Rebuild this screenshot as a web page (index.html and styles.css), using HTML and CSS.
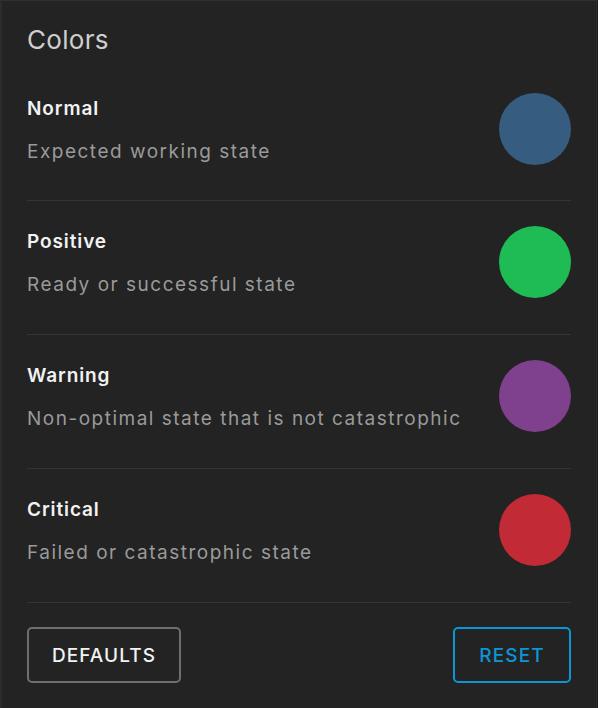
FILE: index.html
```html
<!DOCTYPE html>
<html>
<head>
<meta charset="utf-8">
<link rel="stylesheet" href="styles.css">
</head>
<body>
<div class="panel">
  <h1 class="title">Colors</h1>
  <div class="row">
    <div class="text">
      <div class="name">Normal</div>
      <div class="desc">Expected working state</div>
    </div>
    <div class="swatch normal"></div>
  </div>
  <div class="row">
    <div class="text">
      <div class="name">Positive</div>
      <div class="desc">Ready or successful state</div>
    </div>
    <div class="swatch positive"></div>
  </div>
  <div class="row">
    <div class="text">
      <div class="name">Warning</div>
      <div class="desc">Non-optimal state that is not catastrophic</div>
    </div>
    <div class="swatch warning"></div>
  </div>
  <div class="row">
    <div class="text">
      <div class="name">Critical</div>
      <div class="desc">Failed or catastrophic state</div>
    </div>
    <div class="swatch critical"></div>
  </div>
  <div class="actions">
    <button class="btn btn-default">DEFAULTS</button>
    <button class="btn btn-reset">RESET</button>
  </div>
</div>
</body>
</html>
```
FILE: styles.css
```css
html, body {
  margin: 0;
  padding: 0;
  background: #1b1b1b;
}
body {
  font-family: Inter, "Noto Sans", sans-serif;
  width: 598px;
  height: 708px;
  overflow: hidden;
}
.panel {
  box-sizing: border-box;
  width: 597px;
  height: 708px;
  background: #232323;
  border-top: 1px solid #303030;
  border-left: 2px solid #2c2c2c;
  border-right: 1px solid #2c2c2c;
  padding: 0 25px 0 25px;
  display: flex;
  flex-direction: column;
}
.title {
  margin: 0;
  height: 67px;
  box-sizing: border-box;
  padding-top: 24px;
  font-size: 26px;
  line-height: 30px;
  font-weight: 400;
  letter-spacing: 0.3px;
  color: #cfcfcf;
}
.row {
  display: flex;
  align-items: center;
  justify-content: space-between;
  padding: 25px 0 36px 0;
  border-bottom: 1px solid #353535;
}
.row:first-of-type {
  padding-bottom: 35px;
}
.text {
  display: flex;
  flex-direction: column;
  gap: 19px;
  margin-top: 2px;
}
.name {
  font-size: 19px;
  line-height: 24px;
  font-weight: 600;
  letter-spacing: 0.9px;
  color: #f2f2f2;
}
.desc {
  font-size: 19px;
  line-height: 24px;
  letter-spacing: 1.5px;
  color: #9a9a9a;
}
.swatch {
  width: 72px;
  height: 72px;
  border-radius: 50%;
  flex: none;
}
.normal { background: #365c80; }
.positive { background: #1fbb55; }
.warning { background: #7f418e; }
.critical { background: #c22b36; }
.actions {
  display: flex;
  justify-content: space-between;
  padding-top: 24px;
}
.btn {
  height: 56px;
  box-sizing: border-box;
  background: transparent;
  border-radius: 5px;
  font-family: Inter, "Noto Sans", sans-serif;
  font-size: 19px;
  font-weight: 500;
  letter-spacing: 1.1px;
  cursor: pointer;
  padding: 0;
}
.btn-default {
  width: 154px;
  border: 2px solid #6e6e6e;
  color: #f2f2f2;
}
.btn-reset {
  width: 118px;
  border: 2px solid #0a97d6;
  color: #0a97d6;
}
```
